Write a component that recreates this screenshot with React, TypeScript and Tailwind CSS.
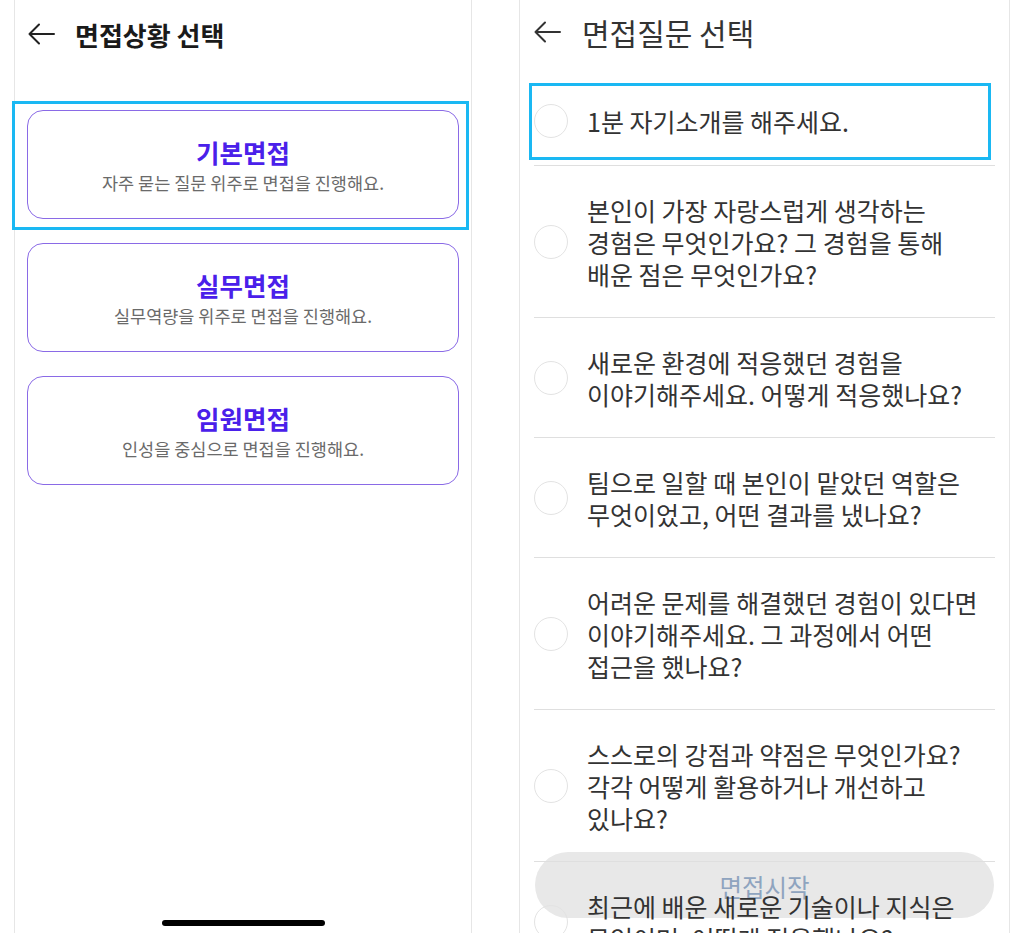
import React from "react";

const FONT = { fontFamily: '"Noto Sans CJK KR", "Noto Sans", sans-serif' };

const BackArrow: React.FC<{ color?: string }> = ({ color = "#222" }) => (
  <svg width="28" height="22" viewBox="0 0 28 22" fill="none">
    <path d="M27 11H2.5M12 1.5L2.5 11L12 20.5" stroke={color} strokeWidth="2" strokeLinecap="round" strokeLinejoin="round" />
  </svg>
);

const situations = [
  { title: "기본면접", desc: "자주 묻는 질문 위주로 면접을 진행해요." },
  { title: "실무면접", desc: "실무역량을 위주로 면접을 진행해요." },
  { title: "임원면접", desc: "인성을 중심으로 면접을 진행해요." },
];

const questions: string[][] = [
  ["1분 자기소개를 해주세요."],
  ["본인이 가장 자랑스럽게 생각하는", "경험은 무엇인가요? 그 경험을 통해", "배운 점은 무엇인가요?"],
  ["새로운 환경에 적응했던 경험을", "이야기해주세요. 어떻게 적응했나요?"],
  ["팀으로 일할 때 본인이 맡았던 역할은", "무엇이었고, 어떤 결과를 냈나요?"],
  ["어려운 문제를 해결했던 경험이 있다면", "이야기해주세요. 그 과정에서 어떤", "접근을 했나요?"],
  ["스스로의 강점과 약점은 무엇인가요?", "각각 어떻게 활용하거나 개선하고", "있나요?"],
  ["최근에 배운 새로운 기술이나 지식은", "무엇이며, 어떻게 적용했나요?"],
];

const SituationScreen: React.FC = () => (
  <div className="relative flex h-full w-[458px] flex-col border-x border-[#e6e6e6] bg-white">
    <div className="flex h-[68px] items-center gap-[20px] pl-3">
      <BackArrow />
      <h1 className="text-[26px] font-bold text-[#1a1a1a]">면접상황 선택</h1>
    </div>
    <div className="mt-[42px] flex flex-col gap-[24px] px-3">
      {situations.map((s) => (
        <div
          key={s.title}
          className="flex h-[109px] flex-col items-center rounded-2xl border-[1.5px] border-[#8a6ae6] pt-[24px]"
        >
          <div className="text-[25.5px] font-bold leading-[34px] text-[#4a20ea]">{s.title}</div>
          <div className="mt-[1px] text-[17.5px] leading-[26px] text-[#6a6a6a]">{s.desc}</div>
        </div>
      ))}
    </div>
    <div className="absolute left-[-3px] top-[101px] h-[129px] w-[457px] border-[3px] border-[#1ab8f3]" />
    <div className="mt-auto mb-[7px] h-[6px] w-[163px] self-center rounded-full bg-black" />
  </div>
);

const QuestionScreen: React.FC = () => (
  <div className="relative ml-[47px] flex h-full w-[491px] flex-col overflow-hidden border-x border-[#e6e6e6] bg-white">
    <div className="flex h-[64px] shrink-0 items-center gap-[21px] pl-[13px]">
      <BackArrow color="#333" />
      <h1 className="text-[30px] font-normal text-[#333]">면접질문 선택</h1>
    </div>
    <div className="relative z-10 flex flex-col px-[14px] pt-[12px]">
      {questions.map((lines, i) => (
        <div key={i} className="flex items-center gap-[19px] border-b border-[#dfdfdf] py-[27.5px]">
          <div className="h-[34px] w-[34px] shrink-0 rounded-full border-[1.5px] border-[#e3e3e3]" />
          <div className="text-[25px] leading-[32px] whitespace-nowrap text-[#333]">
            {lines.map((l, j) => (
              <div key={j}>{l}</div>
            ))}
          </div>
        </div>
      ))}
    </div>
    <div className="absolute left-[9px] top-[83px] z-20 h-[77px] w-[462px] border-[3px] border-[#1ab8f3]" />
    <button className="absolute bottom-[15px] left-[15px] right-[15px] z-0 flex h-[66px] items-center justify-center rounded-full bg-[#e8e8e8] pt-[4px] text-[24.5px] text-[#8fa4bf]">
      면접시작
    </button>
  </div>
);

export default function App() {
  return (
    <div className="flex h-[933px] w-[1024px] overflow-hidden bg-white pl-[14px]" style={FONT}>
      <SituationScreen />
      <QuestionScreen />
    </div>
  );
}
